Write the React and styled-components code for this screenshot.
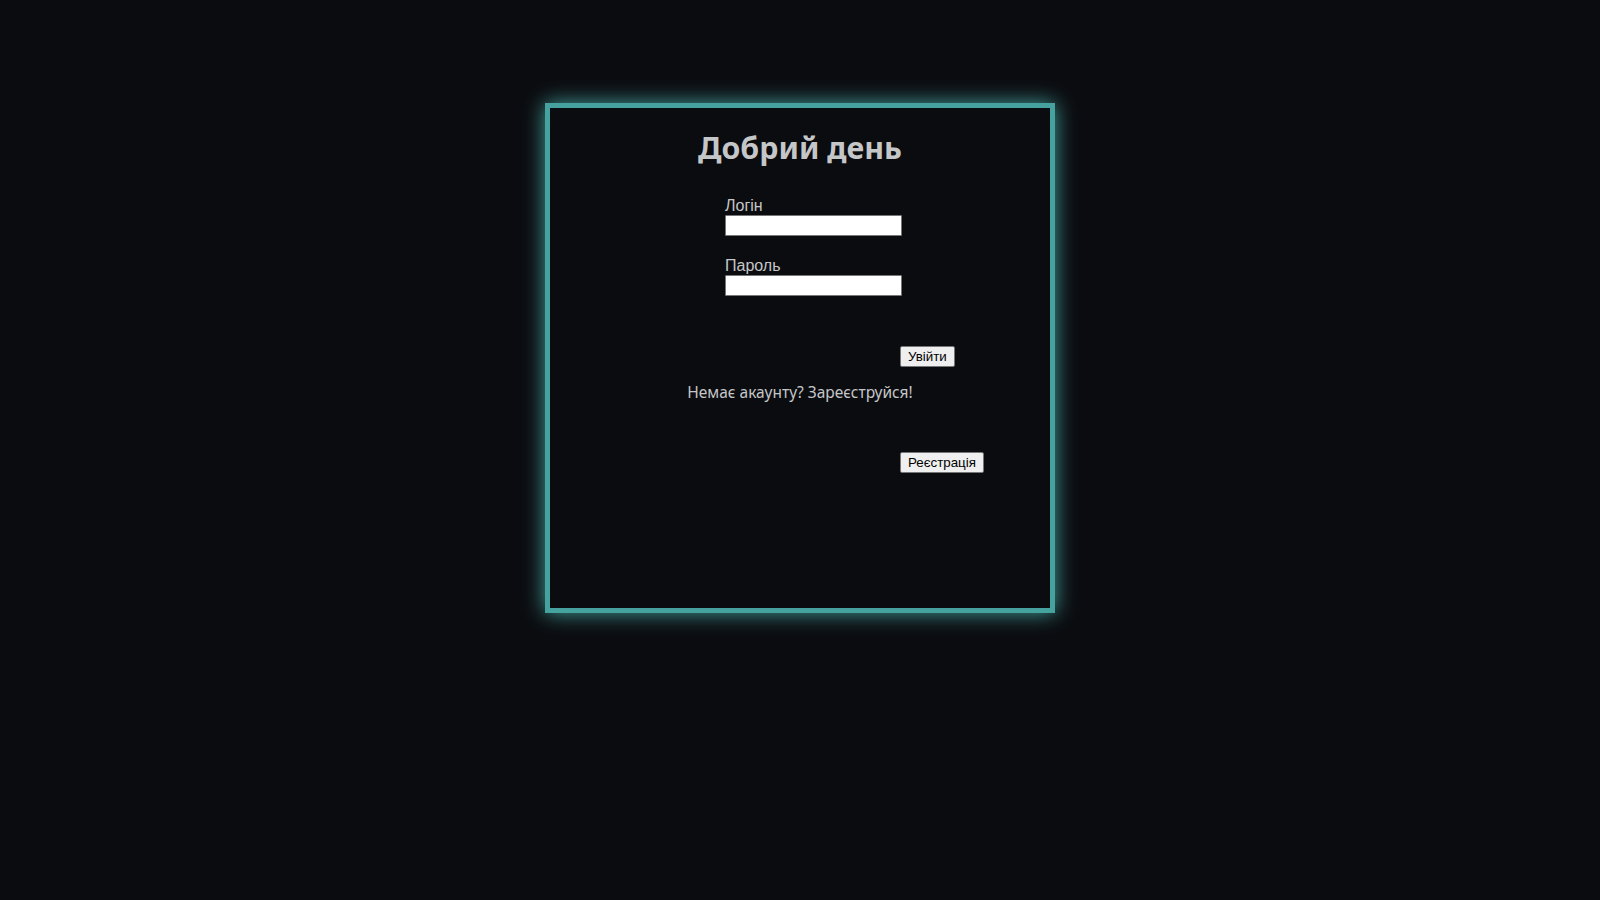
import React from "react";
import styled, { createGlobalStyle } from "styled-components";

const Global = createGlobalStyle`
  html, body {
    margin: 0;
    padding: 0;
    background: #0b0c10;
  }
  body {
    font-family: "Noto Sans", "Liberation Sans", sans-serif;
    color: #c5c6c7;
  }
`;

const Page = styled.div`
  min-height: 900px;
  padding-top: 103px;
  box-sizing: border-box;
`;

const Card = styled.section`
  width: 510px;
  height: 510px;
  margin: 0 auto;
  border: 5px solid #45a29e;
  box-shadow: 0 0 20px #45a29e;
  padding-top: 20px;
  box-sizing: border-box;
  display: flex;
  flex-direction: column;
  background: #0b0c10;
`;

const Title = styled.h1`
  margin: 0;
  font-family: "Noto Sans", sans-serif;
  font-weight: 700;
  font-size: 30.3px;
  line-height: 40px;
  text-align: center;
  color: #c5c6c7;
`;

const Form = styled.form`
  display: flex;
  flex-direction: column;
  margin: 29px 0 0 175px;
  gap: 21px;
`;

const Field = styled.div`
  display: flex;
  flex-direction: column;
  align-items: flex-start;
`;

const Label = styled.label`
  font-family: "Liberation Sans", Arial, sans-serif;
  font-size: 16px;
  line-height: 18px;
  color: #c5c6c7;
`;

const Input = styled.input`
  width: 177px;
  height: 21px;
  box-sizing: border-box;
  background: #ffffff;
  border: 1px solid #767676;
  border-radius: 1px;
  padding: 1px 2px;
  margin: 0;
  font-family: "Liberation Sans", Arial, sans-serif;
  font-size: 13.33px;
`;

const ButtonRow = styled.div`
  display: flex;
  padding-left: 350px;
  margin-top: ${(p) => p.$top}px;
`;

const Button = styled.button`
  height: 21px;
  box-sizing: border-box;
  padding: 1px 7px;
  margin: 0;
  font-family: "Liberation Sans", Arial, sans-serif;
  font-size: 13.33px;
  line-height: 15px;
  color: #000000;
  background: #efefef;
  border: 1px solid #767676;
  border-radius: 2px;
  cursor: pointer;
`;

const Note = styled.p`
  margin: 14px 0 0;
  text-align: center;
  font-family: "Noto Sans", sans-serif;
  font-size: 15.5px;
  line-height: 22px;
  color: #c5c6c7;
`;

export default function App() {
  return (
    <>
      <Global />
      <Page>
        <Card>
          <Title>Добрий день</Title>
          <Form onSubmit={(e) => e.preventDefault()}>
            <Field>
              <Label htmlFor="login">Логін</Label>
              <Input id="login" type="text" />
            </Field>
            <Field>
              <Label htmlFor="password">Пароль</Label>
              <Input id="password" type="password" />
            </Field>
          </Form>
          <ButtonRow $top={50}>
            <Button type="button">Увійти</Button>
          </ButtonRow>
          <Note>Немає акаунту? Зареєструйся!</Note>
          <ButtonRow $top={49}>
            <Button type="button">Реєстрація</Button>
          </ButtonRow>
        </Card>
      </Page>
    </>
  );
}
